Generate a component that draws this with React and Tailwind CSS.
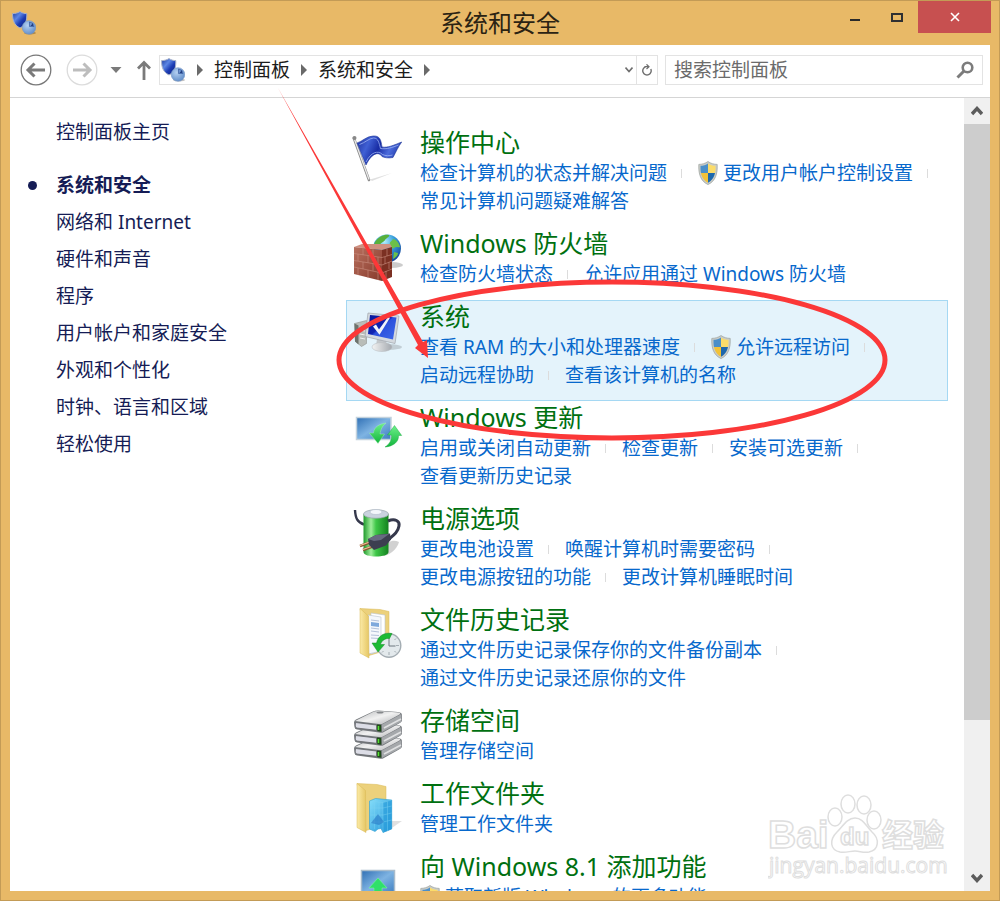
import React from 'react';

const NAV_ITEMS = [
    '网络和 Internet',
    '硬件和声音',
    '程序',
    '用户帐户和家庭安全',
    '外观和个性化',
    '时钟、语言和区域',
    '轻松使用',
];

/* ---------- Icons ---------- */

const SecurityIcon = ({ className }) => (
    <svg viewBox="0 0 24 24" className={className} aria-hidden="true">
        <defs>
            <linearGradient id="secShield" x1="0" y1="0" x2="1" y2="1">
                <stop offset="0" stopColor="#1c3a9c" />
                <stop offset="0.35" stopColor="#5c86e4" />
                <stop offset="0.6" stopColor="#1c3cb4" />
                <stop offset="1" stopColor="#0c1c74" />
            </linearGradient>
            <radialGradient id="secPie" cx="0.4" cy="0.35" r="0.7">
                <stop offset="0" stopColor="#b4d0f2" />
                <stop offset="1" stopColor="#5f8cc8" />
            </radialGradient>
        </defs>
        <ellipse cx="18" cy="22" rx="6" ry="1.4" fill="#000" opacity="0.25" />
        <path d="M8 0.5C6 2 3 2.6 0.6 2.6 0.4 9 2 14 8 17c6-3 7-8 6.8-14.4C12.5 2.6 10 2 8 0.5z" fill="url(#secShield)" stroke="#a9b3c9" strokeWidth="1" />
        <circle cx="17" cy="16.5" r="6.8" fill="url(#secPie)" stroke="#7496c4" strokeWidth="0.6" />
        <path d="M17.500 15.500V11a5 5 0 0 1 4.500 4.500z" fill="#6d95d2" stroke="#2e4f94" strokeWidth="0.6" />
        <path d="M18.500 15l2.500-3v3z" fill="#233f80" />
    </svg>
);

const UacShield = () => (
    <svg viewBox="0 0 20 24" className="h-6 w-5 shrink-0" aria-hidden="true">
        <defs>
            <clipPath id="uacClip">
                <path d="M10 2.5C8 4 5 4.8 2.5 4.8 2.2 13 4 18.5 10 21.8c6-3.3 7.800-8.800 7.500-17C15 4.800 12 4 10 2.500z" />
            </clipPath>
        </defs>
        <path d="M10 0.500C7.500 2.400 4 3.400 0.800 3.400 0.400 13 2.500 20 10 23.600c7.500-3.600 9.600-10.600 9.200-20.200C16 3.400 12.500 2.400 10 0.500z" fill="#c9ccc8" stroke="#9ba09c" strokeWidth="0.7" />
        <g clipPath="url(#uacClip)">
            <path d="M0 0h10v12H0z" fill="#4b8fc9" />
            <path d="M10 0h10v12H10z" fill="#fbdc6a" />
            <path d="M0 12h10v12H0z" fill="#f2c238" />
            <path d="M10 12h10v12H10z" fill="#1d68ad" />
        </g>
    </svg>
);

const FlagIcon = () => (
    <>
        <defs>
            <linearGradient id="flagBlue" x1="0" y1="0" x2="1" y2="0.3">
                <stop offset="0" stopColor="#1c2f9c" />
                <stop offset="0.3" stopColor="#4060d4" />
                <stop offset="0.55" stopColor="#182ca4" />
                <stop offset="0.8" stopColor="#4c6cdc" />
                <stop offset="1" stopColor="#2a44b4" />
            </linearGradient>
        </defs>
        <path d="M18 47.500L40 41l-20 8z" fill="#000" opacity="0.12" />
        <path d="M1.800 6L17 48" stroke="#8d8d8d" strokeWidth="2.600" strokeLinecap="round" />
        <path d="M2 6L17 47.500" stroke="#ececec" strokeWidth="1.200" />
        <circle cx="2.500" cy="6" r="2" fill="#888" />
        <path d="M5 11C11 9 14 4.500 21 4c7-.5 8 4 9 11 6 1 12-2 19.700-5C46 15 44 20 41 25.500c-5 1-9 0-11-1-3-5-10-4-16 8.500z" fill="url(#flagBlue)" stroke="#203898" strokeWidth="0.6" />
        <path d="M7.500 12.500c6-2 9-6 14-6.500 5 0 5.500 5 7 10.500 6 1 12-1 18-3.500M14 30c5-10 12-12 16.500-7.500 3 1.500 7 1.500 10 .5" fill="none" stroke="#9db3f2" strokeWidth="0.8" />
    </>
);

const FirewallIcon = () => (
    <>
        <defs>
            <radialGradient id="globe" cx="0.4" cy="0.25" r="0.8">
                <stop offset="0" stopColor="#b5f0ff" />
                <stop offset="0.45" stopColor="#3ba1dc" />
                <stop offset="1" stopColor="#123e96" />
            </radialGradient>
            <linearGradient id="bricks" x1="0" y1="0" x2="1" y2="1">
                <stop offset="0" stopColor="#b8705e" />
                <stop offset="1" stopColor="#86392b" />
            </linearGradient>
        </defs>
        <ellipse cx="40" cy="32" rx="11" ry="3" fill="#000" opacity="0.2" />
        <circle cx="35" cy="15.500" r="14" fill="url(#globe)" />
        <path d="M23 9c4-6 10-8 14-7 1 2-3 3-4 5s-4 2-5 5-4 3-6 5c-1-3 0-5 1-8z" fill="#58b13c" />
        <path d="M41 6c3 0 6 4 7 8-2 1-4-1-6 1s-3-2-4-4 2-3 3-5zM42 19l4 1c0 3-3 5-5 6z" fill="#6cc04a" />
        <path d="M2 14l8-3h28l2 3-10 3z" fill="#cf9080" />
        <path d="M2 14l28 3v31L2 41z" fill="url(#bricks)" />
        <path d="M30 17l10-3v30l-10 4z" fill="#7b3022" />
        <path d="M2 20.500l28 4 10-3M2 27.500l28 4.500 10-4M2 34l28 6 10-4M11 15v7M21 16.200v7M6 21v7M16 22.700v7M26 24v7M11 29v7M21 30.600v7M6 35v7M16 37v8M26 39v8M35 16v7M33 24v7M37 29v7M34 38v7" stroke="#c98f80" strokeWidth="0.6" fill="none" />
    </>
);

const SystemIcon = () => (
    <>
        <defs>
            <linearGradient id="sysScreen" x1="0" y1="0" x2="1" y2="1">
                <stop offset="0" stopColor="#0a1a9c" />
                <stop offset="0.45" stopColor="#0f22b0" />
                <stop offset="0.5" stopColor="#2c50dc" />
                <stop offset="1" stopColor="#3d69ea" />
            </linearGradient>
            <linearGradient id="sysStand" x1="0" y1="0" x2="1" y2="0">
                <stop offset="0" stopColor="#f4f4f4" />
                <stop offset="1" stopColor="#a3a8ae" />
            </linearGradient>
        </defs>
        <ellipse cx="36" cy="41" rx="14" ry="3" fill="#000" opacity="0.15" />
        <path d="M2.500 17.500l12-3v23l-5 3-6-5z" fill="#b9bdb9" stroke="#8e928e" strokeWidth="0.6" />
        <path d="M2.500 17.500l4 2v19l-3.500-3z" fill="#6d736d" />
        <path d="M8 24l5 1M8 28l5 1M8 32l5 1" stroke="#eee" />
        <path d="M25 33l9 2 1 5H24z" fill="#c3c7cb" />
        <ellipse cx="30" cy="41" rx="10" ry="4.500" fill="url(#sysStand)" stroke="#b5b9bd" strokeWidth="0.5" />
        <path d="M16 7l31 3-4 27.500-30-7z" fill="#d5dadf" stroke="#9fa5ac" strokeWidth="0.7" />
        <path d="M18 9l26.500 2.500-3.500 22-25-5.500z" fill="url(#sysScreen)" />
        <path d="M21 20.500l3-2 3 5 9-12.500 2 .8-10.500 17z" fill="#f1f3fa" />
    </>
);

const UpdateIcon = () => (
    <>
        <defs>
            <linearGradient id="updScreen" x1="0" y1="0" x2="1" y2="1">
                <stop offset="0" stopColor="#2f6fb4" />
                <stop offset="0.5" stopColor="#7eb3e2" />
                <stop offset="1" stopColor="#3b7cc0" />
            </linearGradient>
            <linearGradient id="updGreen" x1="0" y1="0" x2="0" y2="1">
                <stop offset="0" stopColor="#6df08a" />
                <stop offset="1" stopColor="#12b53c" />
            </linearGradient>
        </defs>
        <path d="M4.500 10.500h34.500v22H4.500z" fill="url(#updScreen)" stroke="#c3d2dd" strokeWidth="1.500" />
        <path d="M34 16c-7 1-12 4-12.500 10h-4.200l8.700 10.500 6.500-9.500h-4.500c.5-4 2-8 6-11z" fill="url(#updGreen)" stroke="#b4f5c0" strokeWidth="0.4" />
        <path d="M33 40c8-.5 14-5 13.500-11.500h3.200L42.500 18.500 35.500 28h4c.5 4-1.500 9-6.500 12z" fill="url(#updGreen)" stroke="#0fa338" strokeWidth="0.4" />
    </>
);

const PowerIcon = () => (
    <>
        <defs>
            <linearGradient id="battery" x1="0" y1="0" x2="1" y2="0">
                <stop offset="0" stopColor="#1f9a2c" />
                <stop offset="0.3" stopColor="#a0ee9c" />
                <stop offset="0.5" stopColor="#3fc748" />
                <stop offset="1" stopColor="#14821f" />
            </linearGradient>
        </defs>
        <path d="M28 48c8 1 17-6 19-14-6-3-12 0-14 4z" fill="#000" opacity="0.18" />
        <path d="M3 2c.5 8 2 12 9 14.500" stroke="#35384c" strokeWidth="2.400" fill="none" />
        <path d="M11.500 6v38c0 6 25 6 25 0V6z" fill="url(#battery)" />
        <ellipse cx="24" cy="6" rx="12.500" ry="4.300" fill="#c9d2de" stroke="#93a2a8" strokeWidth="0.7" />
        <ellipse cx="24" cy="4" rx="6" ry="2.500" fill="#f3f6fb" stroke="#aab4c4" strokeWidth="0.5" />
        <path d="M36 13c7-3 12 0 11 5-1 6-5 9-10 13" stroke="#35384c" strokeWidth="3" fill="none" />
        <path d="M8 38l11-4M11 42l11-4" stroke="#8a5430" strokeWidth="2.600" />
        <path d="M8 37.500l11-4M11 41.500l11-4" stroke="#efc098" strokeWidth="1.300" />
        <path d="M16 31l8-4 14-1.500 1 6-5 6-12 4.500-5-5z" fill="#3c3f50" />
        <path d="M16 31l8-4 13-1-8 6-7 1z" fill="#676b80" />
    </>
);

const FolderShell = ({ id }) => (
    <>
        <defs>
            <linearGradient id={id} x1="0" y1="0" x2="1" y2="0">
                <stop offset="0" stopColor="#fbeaa6" />
                <stop offset="1" stopColor="#e6c765" />
            </linearGradient>
        </defs>
        <path d="M5 0.500l20 1 9 2v38l-20 6z" fill="#ecd17c" stroke="#d8b855" strokeWidth="0.5" />
    </>
);

const FileHistoryIcon = () => (
    <>
        <g transform="translate(3 -1)">
            <FolderShell id="fhFlap" />
            <path d="M16 5l14 2v34l-14 5z" fill="#fff" stroke="#b9c2cc" strokeWidth="0.6" />
            <path d="M13 7l13 2v34l-13 3z" fill="#f5f8fc" stroke="#b9c2cc" strokeWidth="0.6" />
            <path d="M16 12l8 1M16 20l8 1M16 23l8 1M16 27l8 .5M16 30l8 .5" stroke="#b3c1d9" />
            <path d="M16 14l8 1v4l-8-1z" fill="#7fa9dc" />
            <path d="M5 0.500l8.500 7.500.5 42-9-5z" fill="url(#fhFlap)" stroke="#d8b855" strokeWidth="0.5" />
        </g>
        <circle cx="37" cy="36.500" r="11.800" fill="#e3e9ec" stroke="#a4adb3" strokeWidth="1.400" />
        <path d="M37 27v3M37 43v3M27.500 36.500h2M44 36.500h3M44 29.500l-1.500 1.500M44 43.500l-1.500-1.500M30 43.500l1.500-1.500" stroke="#a3acb2" />
        <path d="M37 29.500v7.500h6.500" stroke="#6d777e" strokeWidth="1" fill="none" />
        <path d="M40 24.500c-8-1.500-14 2.500-15.500 9.500h-4.500l6 9 6.500-7.500h-4c1-4 5-6.500 9-6z" fill="#1cba34" stroke="#138c25" strokeWidth="0.5" />
    </>
);

const WorkFoldersIcon = () => (
    <>
        <path d="M34 49l16-11-10 0z" fill="#000" opacity="0.12" />
        <FolderShell id="wfFlap" />
        <path d="M5 0.500l8.500 7 .5 42-9-5z" fill="url(#wfFlap)" stroke="#d8b855" strokeWidth="0.5" />
        <defs>
            <linearGradient id="building" x1="0" y1="0" x2="1" y2="1">
                <stop offset="0" stopColor="#86defa" />
                <stop offset="1" stopColor="#1d92d8" />
            </linearGradient>
        </defs>
        <path d="M17.500 18l6-2.500 16.200 1.500v29L31 49.500l-2-4-3 .5-3 2.500-5.500-2.500z" fill="url(#building)" stroke="#2f9fd2" strokeWidth="0.6" />
        <path d="M31 19.500l8.700-2.500v29L31 49.500z" fill="#2b9edb" opacity="0.7" />
        <path d="M17.500 18L31 19.500 39.700 17M31 19.500v30M18 25h13l8.700-2M18 32h13l8.700-2M18 39h13l8.700-2M22.500 18.500V46M27 19v26M35.500 18.500V48" stroke="#7fd3f3" strokeWidth="0.4" fill="none" />
        <path d="M19 40l7-9 6 8-5 3z" fill="#2677c4" opacity="0.6" />
    </>
);

const Drive = ({ y }) => (
    <g transform={`translate(0 ${y})`}>
        <path d="M2 12.500Q2 10.500 4 9.500L21 1.500Q23 .5 26 .5L46 2Q50 2.500 50 5v5.500Q50 12 47 13.500L31 22.500Q29.500 23 27 22.500L5 19.500Q2.500 19 2.500 17z" fill="#75797d" />
        <path d="M3 11L22 1.500Q24 .8 27 1l19 1.500q3.500.5 1.500 2L31 13.500Q29.500 14.500 27 14z" fill="url(#driveTop)" />
        <path d="M3.500 12.500l21 2.500v5.300L4.500 18Q2.500 17 3.500 12.500z" fill="#dcdde6" stroke="#63666a" strokeWidth="0.8" />
        <path d="M30 14.500L49.500 4v6.500Q49.500 12 47 13L30 22z" fill="#a5a8ab" />
        <path d="M32 18l17-9" stroke="#dfe0e1" strokeWidth="1.800" />
        <path d="M25 14.500l4 .3.300 7-4-.5z" fill="#1f4a19" />
        <path d="M26.500 16v4" stroke="#55dd33" strokeWidth="1.500" />
    </g>
);

const StorageIcon = () => (
    <>
        <defs>
            <linearGradient id="driveTop" x1="0" y1="0" x2="1" y2="1">
                <stop offset="0" stopColor="#b5b7b9" />
                <stop offset="0.5" stopColor="#f1f1f1" />
                <stop offset="1" stopColor="#aeb0b3" />
            </linearGradient>
        </defs>
        <Drive y={26} />
        <Drive y={13} />
        <Drive y={0} />
        <ellipse cx="28" cy="2.500" rx="3.500" ry="1" fill="#85888b" />
    </>
);

const AddFeaturesIcon = () => (
    <>
        <path d="M9.500 14.500h33v24h-33z" fill="url(#updScreen)" stroke="#a9bccb" strokeWidth="1.500" />
        <path d="M26 22l9 10h-5v10h-8V32h-5z" fill="#2fe06a" stroke="#7cf5a0" strokeWidth="0.6" />
    </>
);

/* ---------- Data ---------- */

const SECTIONS = [
    {
        title: '操作中心',
        Icon: FlagIcon,
        rows: [
            [{ text: '检查计算机的状态并解决问题', sep: true }, { text: '更改用户帐户控制设置', shield: true, sep: true }],
            [{ text: '常见计算机问题疑难解答' }],
        ],
    },
    {
        title: 'Windows 防火墙',
        Icon: FirewallIcon,
        rows: [[{ text: '检查防火墙状态', sep: true }, { text: '允许应用通过 Windows 防火墙' }]],
    },
    {
        title: '系统',
        Icon: SystemIcon,
        active: true,
        rows: [
            [{ text: '查看 RAM 的大小和处理器速度', sep: true }, { text: '允许远程访问', shield: true, sep: true }],
            [{ text: '启动远程协助', sep: true }, { text: '查看该计算机的名称' }],
        ],
    },
    {
        title: 'Windows 更新',
        Icon: UpdateIcon,
        rows: [
            [{ text: '启用或关闭自动更新', sep: true }, { text: '检查更新', sep: true }, { text: '安装可选更新', sep: true }],
            [{ text: '查看更新历史记录' }],
        ],
    },
    {
        title: '电源选项',
        Icon: PowerIcon,
        rows: [
            [{ text: '更改电池设置', sep: true }, { text: '唤醒计算机时需要密码', sep: true }],
            [{ text: '更改电源按钮的功能', sep: true }, { text: '更改计算机睡眠时间' }],
        ],
    },
    {
        title: '文件历史记录',
        Icon: FileHistoryIcon,
        rows: [
            [{ text: '通过文件历史记录保存你的文件备份副本', sep: true }],
            [{ text: '通过文件历史记录还原你的文件' }],
        ],
    },
    { title: '存储空间', Icon: StorageIcon, rows: [[{ text: '管理存储空间' }]] },
    { title: '工作文件夹', Icon: WorkFoldersIcon, rows: [[{ text: '管理工作文件夹' }]] },
    {
        title: '向 Windows 8.1 添加功能',
        Icon: AddFeaturesIcon,
        rows: [[{ text: '获取新版 Windows 的更多功能', shield: true }]],
    },
];

/* ---------- Layout pieces ---------- */

const TitleBar = () => (
    <header className="grid h-[45px] shrink-0 grid-cols-[1fr_auto_1fr]">
        <div className="pl-3 pt-[11px]">
            <SecurityIcon className="size-6" />
        </div>
        <h1 className="self-center pt-px text-[24px] leading-8 text-[#2b2313]">系统和安全</h1>
        <div className="flex h-[33px] justify-end pr-[9px]">
            <button type="button" aria-label="最小化" className="flex w-[42px] justify-center pt-[19px]">
                <span className="h-[2px] w-[10px] bg-[#2a2a2a]" />
            </button>
            <button type="button" aria-label="最大化" className="flex w-[42px] justify-center pt-[13px]">
                <span className="h-[9px] w-3 border-2 border-[#2f3032]" />
            </button>
            <button type="button" aria-label="关闭" className="flex w-[73px] items-center justify-center bg-[#c75050]">
                <svg viewBox="0 0 10 10" className="size-[10px]" aria-hidden="true">
                    <path d="M1 1l8 8M9 1L1 9" stroke="#fff" strokeWidth="1.600" />
                </svg>
            </button>
        </div>
    </header>
);

const Crumb = () => (
    <svg viewBox="0 0 6 12" className="h-3 w-[6px] shrink-0" aria-hidden="true">
        <path d="M0 0l6 6-6 6z" fill="#6a6a6a" />
    </svg>
);

const Toolbar = () => (
    <div className="flex h-[53px] shrink-0 items-center border-b border-[#d5d5d5] pl-[10px] pr-[7px] pb-[2px]">
        <button type="button" aria-label="后退" className="shrink-0">
            <svg viewBox="0 0 32 32" className="size-8" fill="none" aria-hidden="true">
                <circle cx="16" cy="16" r="14.800" stroke="#787878" strokeWidth="1.300" />
                <path d="M8 16h17M14.500 9.500L8 16l6.500 6.500" stroke="#7a7a7a" strokeWidth="3" />
            </svg>
        </button>
        <button type="button" aria-label="前进" className="ml-[14px] shrink-0">
            <svg viewBox="0 0 32 32" className="size-8" fill="none" aria-hidden="true">
                <circle cx="16" cy="16" r="14.800" stroke="#dcdcdc" strokeWidth="1.300" />
                <path d="M7 16h17M17.500 9.500L24 16l-6.500 6.500" stroke="#bdbdbd" strokeWidth="3" />
            </svg>
        </button>
        <button type="button" aria-label="最近位置" className="ml-3 shrink-0">
            <svg viewBox="0 0 12 6" className="h-[6px] w-3" aria-hidden="true">
                <path d="M0.500 0h11L6 6z" fill="#7a7a7a" />
            </svg>
        </button>
        <button type="button" aria-label="上移" className="ml-[14px] shrink-0">
            <svg viewBox="0 0 16 20" className="h-5 w-4" fill="none" aria-hidden="true">
                <path d="M8 20V2M2 8.500L8 2.500l6 6" stroke="#7a7a7a" strokeWidth="2.800" />
            </svg>
        </button>
        <div className="ml-[7px] flex h-[30px] grow items-center border border-[#e3e3e3] pl-px">
            <SecurityIcon className="size-6 shrink-0" />
            <div className="ml-3 flex grow items-center text-[19px] leading-7 text-[#1c1c1c]">
                <Crumb />
                <a href="#panel" className="mx-[11px] whitespace-nowrap">控制面板</a>
                <Crumb />
                <a href="#security" className="mx-[11px] whitespace-nowrap">系统和安全</a>
                <Crumb />
            </div>
            <button type="button" aria-label="以前的位置" className="mr-[3px]">
                <svg viewBox="0 0 8 6" className="h-[6px] w-2" fill="none" aria-hidden="true">
                    <path d="M0.500 0.500L4 4.500l3.500-4" stroke="#6e6e6e" strokeWidth="1.600" />
                </svg>
            </button>
            <button type="button" aria-label="刷新" className="flex h-full w-[21px] items-center justify-center border-l border-[#e3e3e3]">
                <svg viewBox="0 0 12 12" className="size-3" fill="none" aria-hidden="true">
                    <path d="M4.500 2.800A4.200 4.200 0 1 0 9.800 5" stroke="#6e6e6e" strokeWidth="1.400" />
                    <path d="M3.500 2.700h4M5.500 0.300L8 2.700 5.500 5" stroke="#6e6e6e" strokeWidth="1.200" />
                </svg>
            </button>
        </div>
        <form className="ml-[7px] flex h-[30px] w-[318px] shrink-0 items-center border border-[#e3e3e3] pl-2 pr-2">
            <input
                type="text"
                aria-label="搜索控制面板"
                placeholder="搜索控制面板"
                className="min-w-0 grow bg-transparent text-[19px] leading-7 outline-none placeholder:text-[#6b6b6b]"
            />
            <button type="button" aria-label="搜索">
                <svg viewBox="0 0 18 18" className="size-[18px]" fill="none" aria-hidden="true">
                    <circle cx="11.500" cy="6.500" r="4.800" stroke="#7c7c7c" strokeWidth="2.600" />
                    <path d="M8 10l-6.500 6.500" stroke="#7c7c7c" strokeWidth="3" />
                </svg>
            </button>
        </form>
    </div>
);

const Sidebar = () => (
    <nav className="w-[336px] shrink-0 pl-[46px] pt-4 text-[19px] leading-[37px] text-[#151c55]">
        <a href="#home">控制面板主页</a>
        <ul className="mt-4">
            <li className="relative font-bold">
                <span className="absolute -left-7 top-[14px] size-[9px] rounded-full bg-[#151c55]" />
                <a href="#security">系统和安全</a>
            </li>
            {NAV_ITEMS.map((item) => (
                <li key={item}>
                    <a href="#category">{item}</a>
                </li>
            ))}
        </ul>
    </nav>
);

const Section = ({ title, Icon, active, rows }) => (
    <section
        className={
            active
                ? 'flex border border-[#a5d8f3] bg-[#e4f3fb] pb-[11px] pl-[5px]'
                : 'flex border-x border-transparent pb-3 pl-[5px] pt-px'
        }
    >
        <svg viewBox="0 0 52 52" className="mt-[5px] size-[52px] shrink-0 overflow-visible" fill="none" aria-hidden="true">
            <Icon />
        </svg>
        <div className="ml-4">
            <h2 className="h-8 text-[25px] leading-[31px] text-[#007010]">
                <a href="#section">{title}</a>
            </h2>
            {rows.map((row) => (
                <div key={row[0].text} className="flex h-7 items-center text-[19px] leading-7 text-[#0768cc]">
                    {row.map((link) => (
                        <React.Fragment key={link.text}>
                            <a href="#task" className="flex items-center gap-[5px] whitespace-nowrap">
                                {link.shield && <UacShield />}
                                {link.text}
                            </a>
                            {link.sep && <span className="ml-[14px] mr-4 h-[9px] w-px bg-[#dcdcdc]" />}
                        </React.Fragment>
                    ))}
                </div>
            ))}
        </div>
    </section>
);

const ScrollBar = () => (
    <div className="flex w-[26px] shrink-0 flex-col bg-[#f0f0f0]">
        <button type="button" aria-label="向上滚动" className="flex h-[26px] shrink-0 items-center justify-center">
            <svg viewBox="0 0 12 10" className="h-[10px] w-3" fill="none" aria-hidden="true">
                <path d="M1 8l5-5.500L11 8" stroke="#5c5c5c" strokeWidth="3.400" />
            </svg>
        </button>
        <div className="flex grow flex-col">
            <div className="grow-[596] bg-[#cdcdcd]" />
            <div className="grow-[145]" />
        </div>
        <button type="button" aria-label="向下滚动" className="flex h-[26px] shrink-0 items-center justify-center">
            <svg viewBox="0 0 12 10" className="h-[10px] w-3" fill="none" aria-hidden="true">
                <path d="M1 2l5 5.500L11 2" stroke="#5c5c5c" strokeWidth="3.400" />
            </svg>
        </button>
    </div>
);

/* Red circle and arrow drawn over the window */
const Annotation = () => (
    <svg viewBox="0 0 1000 901" width="1000" height="901" className="pointer-events-none absolute left-0 top-0" aria-hidden="true">
        <ellipse cx="612" cy="360" rx="273" ry="78" fill="none" stroke="#fb3838" strokeWidth="5" />
        <path d="M278 88L423 342l4-2 1 18-13-10 3-3z" fill="#fb3838" />
    </svg>
);

const Watermark = () => (
    <svg viewBox="0 0 184 94" width="184" height="94" className="pointer-events-none absolute bottom-[14px] right-12" aria-hidden="true">
        <g fill="#fff" stroke="#dedede" strokeWidth="1.500" className="font-['Liberation_Sans','Noto_Sans_CJK_SC',sans-serif]">
            <text x="0" y="55" fontSize="39" fontWeight="bold">Bai</text>
            <ellipse cx="67" cy="24" rx="7" ry="9" />
            <ellipse cx="80" cy="11" rx="7" ry="9" />
            <ellipse cx="96" cy="12" rx="7" ry="9" />
            <ellipse cx="106" cy="27" rx="7" ry="9" />
            <path d="M87 25c8 0 11 8 17 14 8 7 7 18-3 20-6 1-9-1-14-1s-9 2-15 1c-10-2-11-12-3-20 6-6 10-14 18-14z" />
            <text x="72" y="52" fontSize="24" fontWeight="bold">du</text>
            <text x="114" y="53" fontSize="31" fontWeight="bold">经验</text>
            <text x="1" y="80" fontSize="21" strokeWidth="1" className="font-['Open_Sans',sans-serif]">jingyan.baidu.com</text>
        </g>
    </svg>
);

const App = () => {
    return (
        <div className="relative flex h-screen flex-col overflow-hidden bg-[#e8b967] font-['Noto_Sans','Noto_Sans_CJK_SC',sans-serif]">
            <TitleBar />
            <div className="mx-[10px] mb-[10px] flex min-h-0 grow flex-col bg-white">
                <Toolbar />
                <div className="flex min-h-0 grow">
                    <Sidebar />
                    <main className="mr-4 min-w-0 grow overflow-hidden pt-7">
                        {SECTIONS.map((section) => (
                            <Section key={section.title} {...section} />
                        ))}
                    </main>
                    <ScrollBar />
                </div>
            </div>
            <Watermark />
            <Annotation />
            <div className="pointer-events-none absolute inset-0 border border-[#c39b56]" />
        </div>
    );
};

export default App;
